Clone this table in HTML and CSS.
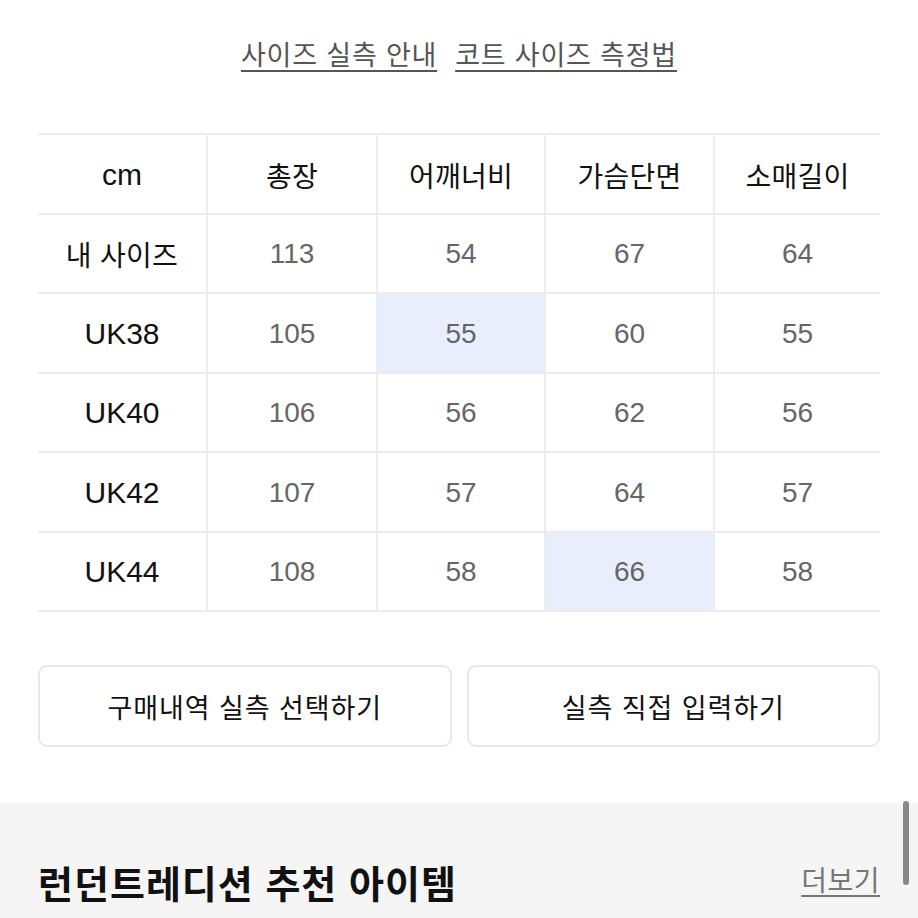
FILE: index.html
```html
<!DOCTYPE html>
<html lang="ko">
<head>
<meta charset="utf-8">
<link rel="stylesheet" href="styles.css">
</head>
<body>
<div class="page">
  <div class="links">
    <a class="link">사이즈 실측 안내</a>
    <a class="link">코트 사이즈 측정법</a>
  </div>

  <div class="table">
    <div class="cell head latin">cm</div>
    <div class="cell head">총장</div>
    <div class="cell head">어깨너비</div>
    <div class="cell head">가슴단면</div>
    <div class="cell head last">소매길이</div>

    <div class="cell label">내 사이즈</div>
    <div class="cell val">113</div>
    <div class="cell val">54</div>
    <div class="cell val">67</div>
    <div class="cell val last">64</div>

    <div class="cell label latin">UK38</div>
    <div class="cell val">105</div>
    <div class="cell val hl">55</div>
    <div class="cell val">60</div>
    <div class="cell val last">55</div>

    <div class="cell label latin">UK40</div>
    <div class="cell val">106</div>
    <div class="cell val">56</div>
    <div class="cell val">62</div>
    <div class="cell val last">56</div>

    <div class="cell label latin">UK42</div>
    <div class="cell val">107</div>
    <div class="cell val">57</div>
    <div class="cell val">64</div>
    <div class="cell val last">57</div>

    <div class="cell label latin">UK44</div>
    <div class="cell val">108</div>
    <div class="cell val">58</div>
    <div class="cell val hl">66</div>
    <div class="cell val last">58</div>
  </div>

  <div class="buttons">
    <button class="btn">구매내역 실측 선택하기</button>
    <button class="btn">실측 직접 입력하기</button>
  </div>

  <div class="reco">
    <h2 class="reco-title">런던트레디션 추천 아이템</h2>
    <a class="more">더보기</a>
  </div>
</div>
<div class="scrollbar"></div>
</body>
</html>
```

FILE: styles.css
```css
* { box-sizing: border-box; }
html, body {
  margin: 0;
  padding: 0;
  background: #ffffff;
}
body {
  width: 918px;
  height: 918px;
  overflow: hidden;
  position: relative;
  font-family: "Noto Sans CJK KR", sans-serif;
  color: #111111;
}
.page {
  display: flex;
  flex-direction: column;
}
.links {
  display: flex;
  justify-content: center;
  gap: 18px;
  padding-top: 36px;
  height: 133px;
}
.link {
  font-size: 27px;
  line-height: 36px;
  color: #555555;
  text-decoration: underline;
  text-decoration-thickness: 2px;
  text-underline-offset: 5px;
  letter-spacing: 0.8px;
}
.table {
  margin: 0 38px;
  display: grid;
  grid-template-columns: 170px 170px 168px 169px 1fr;
  grid-auto-rows: 79.5px;
  border-top: 2px solid #ececec;
}
.cell {
  display: flex;
  align-items: center;
  justify-content: center;
  border-right: 2px solid #ececec;
  border-bottom: 2px solid #ececec;
  font-size: 28px;
  padding-top: 2px;
}
.cell.last { border-right: none; }
.head, .label {
  color: #111111;
  letter-spacing: 0.3px;
}
.latin {
  font-family: "Liberation Sans", sans-serif;
  font-size: 30px;
  letter-spacing: 0;
}
.val {
  font-family: "Liberation Sans", sans-serif;
  font-size: 28px;
  color: #666666;
}
.hl { background: #e9eefc; }
.buttons {
  margin: 53px 38px 0;
  display: grid;
  grid-template-columns: 1fr 1fr;
  gap: 15px;
}
.btn {
  height: 82px;
  background: #ffffff;
  border: 2px solid #e8e8e8;
  border-radius: 9px;
  font-family: "Noto Sans CJK KR", sans-serif;
  font-size: 27px;
  letter-spacing: 0.9px;
  color: #111111;
  padding: 0;
}
.reco {
  margin-top: 56px;
  background: #f5f5f5;
  height: 140px;
  display: flex;
  justify-content: space-between;
  align-items: flex-start;
  padding: 54px 38px 0;
}
.reco-title {
  margin: 0;
  font-size: 38px;
  font-weight: 700;
  line-height: 50px;
  color: #111111;
  letter-spacing: 1px;
}
.more {
  font-size: 28px;
  line-height: 40px;
  margin-top: 2px;
  color: #777777;
  text-decoration: underline;
  text-decoration-thickness: 2px;
  text-underline-offset: 4px;
  letter-spacing: 0.5px;
}
.scrollbar {
  position: absolute;
  left: 903px;
  top: 801px;
  width: 6px;
  height: 84px;
  border-radius: 3px;
  background: #888888;
}
```
